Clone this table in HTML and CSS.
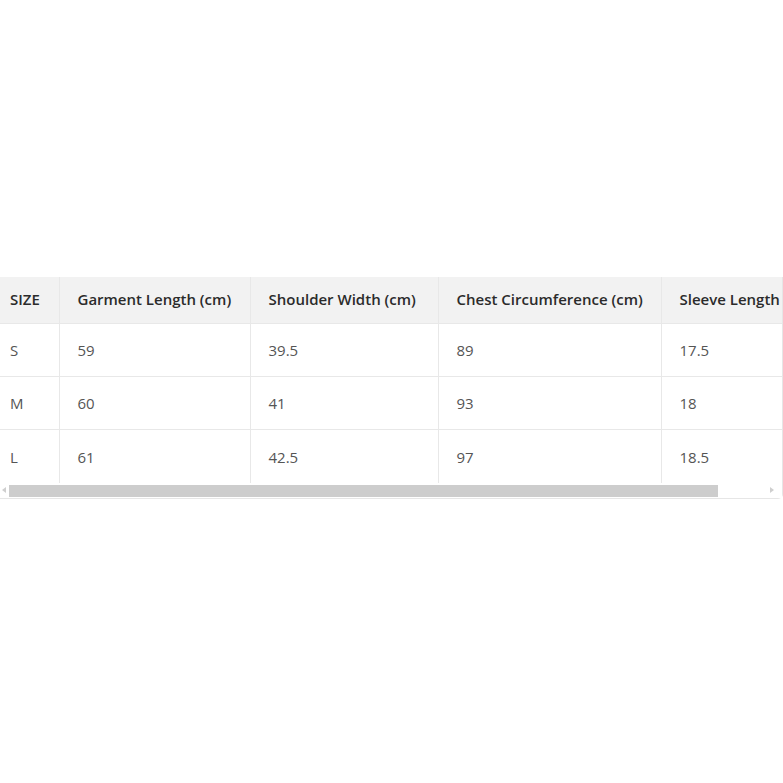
FILE: index.html
```html
<!DOCTYPE html>
<html>
<head>
<meta charset="utf-8">
<link rel="stylesheet" href="styles.css">
</head>
<body>
<div class="wrap">
  <div class="viewport">
    <table class="size-table">
      <colgroup>
        <col class="c1"><col class="c2"><col class="c3"><col class="c4"><col class="c5">
      </colgroup>
      <thead>
        <tr><th>SIZE</th><th>Garment Length (cm)</th><th>Shoulder Width (cm)</th><th>Chest Circumference (cm)</th><th>Sleeve Length (cm)</th></tr>
      </thead>
      <tbody>
        <tr><td>S</td><td>59</td><td>39.5</td><td>89</td><td>17.5</td></tr>
        <tr><td>M</td><td>60</td><td>41</td><td>93</td><td>18</td></tr>
        <tr><td>L</td><td>61</td><td>42.5</td><td>97</td><td>18.5</td></tr>
      </tbody>
    </table>
  </div>
  <div class="scrollbar">
    <span class="arrow arrow-left"></span>
    <div class="track"><div class="thumb"></div></div>
    <span class="arrow arrow-right"></span>
  </div>
</div>
</body>
</html>
```
FILE: styles.css
```css
html, body {
  margin: 0;
  padding: 0;
  background: #fff;
}
body {
  font-family: "Open Sans", "Noto Sans", sans-serif;
}
.wrap {
  margin: 277px 0 0 -7px;
  width: 789px;
  border-bottom: 1px solid #e6e6e6;
  border-right: 1px solid #e6e6e6;
  border-bottom-right-radius: 5px;
}
.viewport {
  overflow: hidden;
}
.size-table {
  border-collapse: collapse;
  table-layout: fixed;
  width: 848px;
  white-space: nowrap;
}
.c1 { width: 66px; }
.c2 { width: 191px; }
.c3 { width: 188px; }
.c4 { width: 223px; }
.c5 { width: 180px; }
.size-table th,
.size-table td {
  text-align: left;
  padding: 0 0 0 17px;
  border-bottom: 1px solid #e8e8e8;
  border-left: 1px solid #e8e8e8;
}
.size-table th:first-child,
.size-table td:first-child {
  border-left: none;
}
.size-table th + th,
.size-table td + td {
  padding-left: 18px;
}
.size-table th {
  height: 44px;
  padding-bottom: 2px;
  background: #f2f2f2;
  font-size: 15px;
  font-weight: 600;
  color: #2b2b2b;
}
.size-table td {
  height: 52px;
  font-size: 15px;
  font-weight: 400;
  color: #555;
}
.size-table tbody tr:last-child td {
  border-bottom: none;
  height: 53px;
}
.scrollbar {
  display: flex;
  height: 15px;
  background: #fff;
}
.arrow {
  width: 15px;
  flex: none;
  position: relative;
}
.arrow::after {
  content: "";
  position: absolute;
  top: 4px;
  border-top: 3.5px solid transparent;
  border-bottom: 3.5px solid transparent;
}
.arrow-left::after {
  left: 9px;
  border-right: 4px solid #cfcfcf;
}
.arrow-right::after {
  left: 3px;
  border-left: 4px solid #cfcfcf;
}
.track {
  flex: 1;
  padding: 2px 0 1px 1px;
}
.thumb {
  width: 709px;
  height: 100%;
  background: #cdcdcd;
}
```
